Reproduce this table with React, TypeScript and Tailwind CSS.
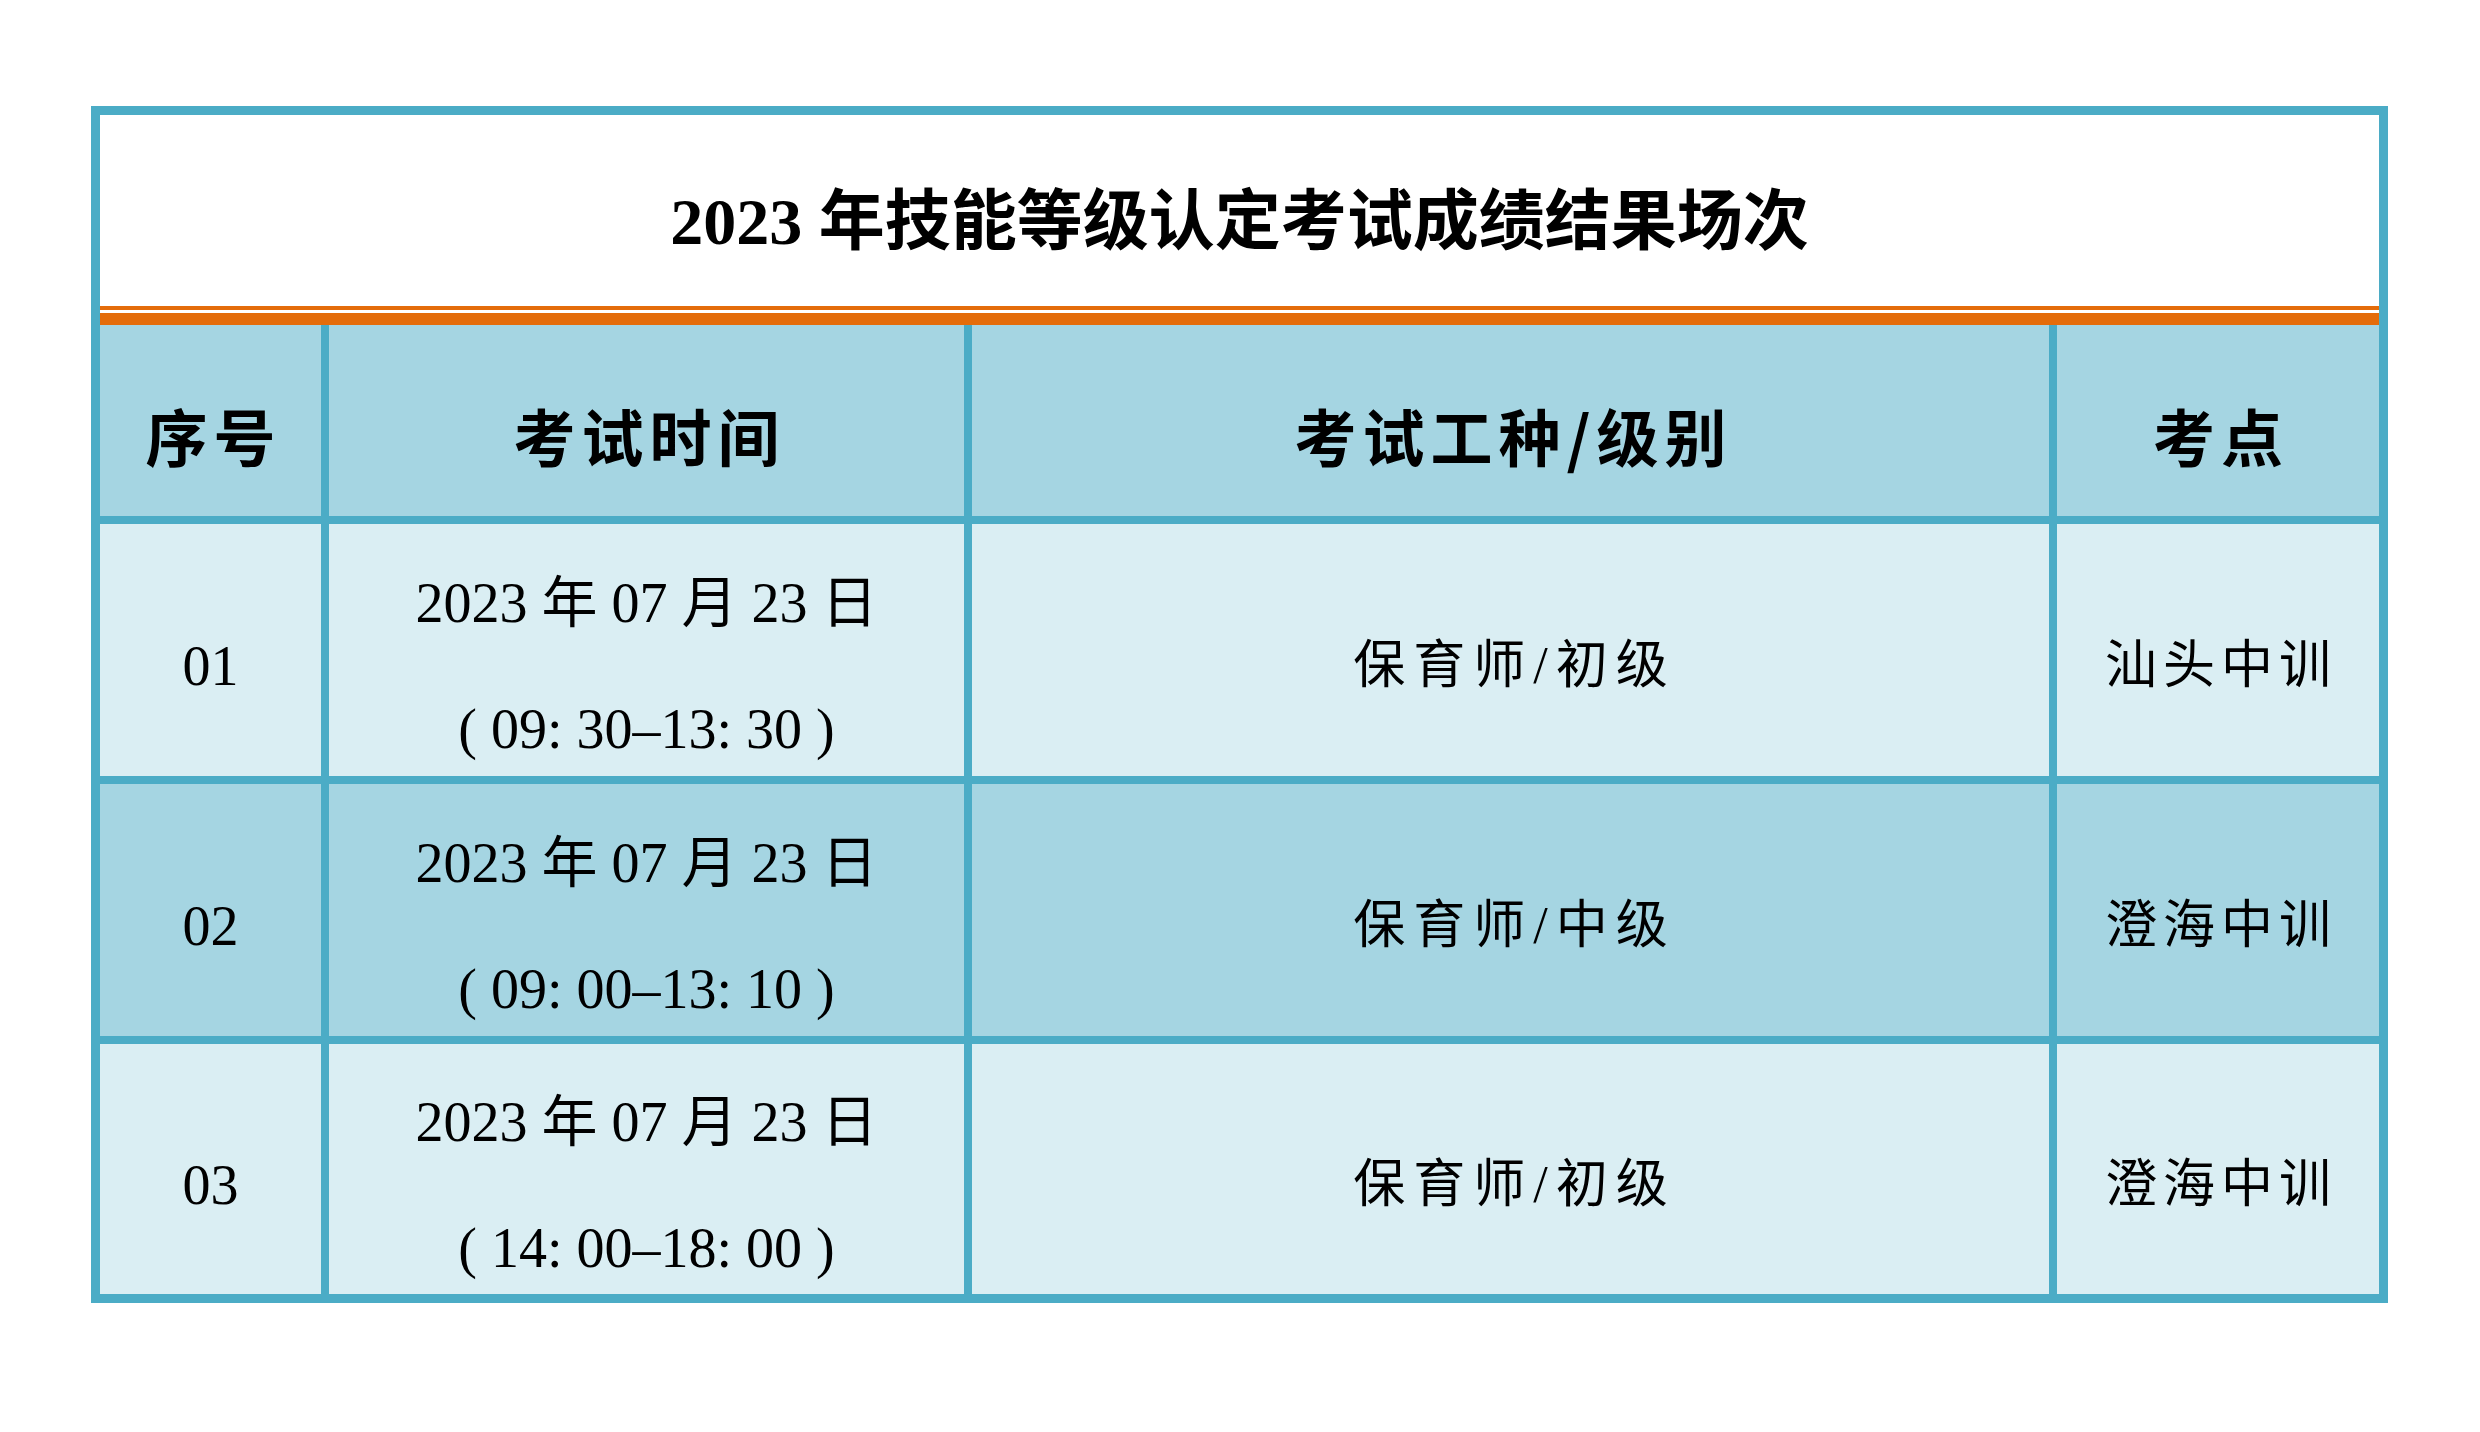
const rows = [
  {
    no: "01",
    date: "2023 年 07 月 23 日",
    time: "( 09: 30–13: 30 )",
    job: "保育师/初级",
    site: "汕头中训",
    bg: "bg-[#daeef3]",
  },
  {
    no: "02",
    date: "2023 年 07 月 23 日",
    time: "( 09: 00–13: 10 )",
    job: "保育师/中级",
    site: "澄海中训",
    bg: "bg-[#a5d5e2]",
  },
  {
    no: "03",
    date: "2023 年 07 月 23 日",
    time: "( 14: 00–18: 00 )",
    job: "保育师/初级",
    site: "澄海中训",
    bg: "bg-[#daeef3]",
  },
];

const headers = ["序号", "考试时间", "考试工种/级别", "考点"];

const serif = "font-['Liberation_Serif','Noto_Sans_CJK_SC',serif]";

const App: React.FC = () => {
  return (
    <div className="w-[2480px] h-[1432px] bg-white overflow-hidden">
      <div className="ml-[91px] mt-[106px] w-[2297px] border-[9px] border-[#4bacc6] flex flex-col text-black">
        {/* Title */}
        <div className="h-[191px] bg-white flex items-center justify-center pt-[22px]">
          <h1 className={`${serif} font-bold text-[66px] leading-none`}>
            2023 年技能等级认定考试成绩结果场次
          </h1>
        </div>

        {/* Orange double rule */}
        <div className="h-[4px] bg-[#e46c0a]" />
        <div className="h-[3px] bg-white" />
        <div className="h-[12px] bg-[#e46c0a]" />

        {/* Table */}
        <div className="grid grid-cols-[221px_635px_1077px_322px] grid-rows-[191px_252px_252px_250px] gap-[8px] bg-[#4bacc6]">
          {headers.map((h) => (
            <div
              key={h}
              className="bg-[#a5d5e2] flex items-center justify-center pt-[28px]"
            >
              <span className="font-['Noto_Sans_CJK_SC',sans-serif] font-bold text-[62px] leading-none tracking-[6px] mr-[-6px]">
                {h}
              </span>
            </div>
          ))}

          {rows.map((r) => (
            <div key={r.no} className="contents">
              <div className={`${r.bg} flex items-center justify-center pt-[32px]`}>
                <span className={`${serif} text-[56px] leading-none`}>{r.no}</span>
              </div>
              <div
                className={`${r.bg} flex flex-col items-center justify-center gap-[70px] pt-[32px] ${serif} text-[56px] leading-[56px]`}
              >
                <div className="whitespace-pre">{r.date}</div>
                <div className="whitespace-pre">{r.time}</div>
              </div>
              <div className={`${r.bg} flex items-center justify-center pt-[32px]`}>
                <span
                  className={`${serif} text-[52px] leading-none tracking-[8px] mr-[-8px]`}
                >
                  {r.job}
                </span>
              </div>
              <div className={`${r.bg} flex items-center justify-center pt-[32px]`}>
                <span
                  className={`${serif} text-[52px] leading-none tracking-[6px] mr-[-6px]`}
                >
                  {r.site}
                </span>
              </div>
            </div>
          ))}
        </div>
      </div>
    </div>
  );
};

export default App;
